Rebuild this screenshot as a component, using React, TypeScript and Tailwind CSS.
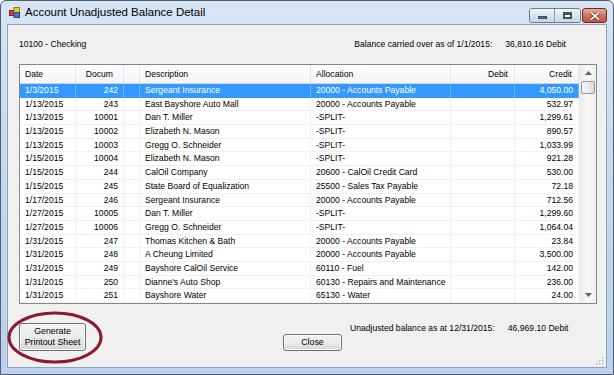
import React from 'react';

const rows = [
  ['1/3/2015', '242', 'Sergeant Insurance', '20000 - Accounts Payable', '', '4,050.00'],
  ['1/13/2015', '243', 'East Bayshore Auto Mall', '20000 - Accounts Payable', '', '532.97'],
  ['1/13/2015', '10001', 'Dan T. Miller', '-SPLIT-', '', '1,299.61'],
  ['1/13/2015', '10002', 'Elizabeth N. Mason', '-SPLIT-', '', '890.57'],
  ['1/13/2015', '10003', 'Gregg O. Schneider', '-SPLIT-', '', '1,033.99'],
  ['1/15/2015', '10004', 'Elizabeth N. Mason', '-SPLIT-', '', '921.28'],
  ['1/15/2015', '244', 'CalOil Company', '20600 - CalOil Credit Card', '', '530.00'],
  ['1/15/2015', '245', 'State Board of Equalization', '25500 - Sales Tax Payable', '', '72.18'],
  ['1/17/2015', '246', 'Sergeant Insurance', '20000 - Accounts Payable', '', '712.56'],
  ['1/27/2015', '10005', 'Dan T. Miller', '-SPLIT-', '', '1,299.60'],
  ['1/27/2015', '10006', 'Gregg O. Schneider', '-SPLIT-', '', '1,064.04'],
  ['1/31/2015', '247', 'Thomas Kitchen & Bath', '20000 - Accounts Payable', '', '23.84'],
  ['1/31/2015', '248', 'A Cheung Limited', '20000 - Accounts Payable', '', '3,500.00'],
  ['1/31/2015', '249', 'Bayshore CalOil Service', '60110 - Fuel', '', '142.00'],
  ['1/31/2015', '250', "Dianne's Auto Shop", '60130 - Repairs and Maintenance', '', '236.00'],
  ['1/31/2015', '251', 'Bayshore Water', '65130 - Water', '', '24.00'],
];

const cols = 'grid grid-cols-[56px_48px_16px_171px_140px_64px_64px]';

const AppIcon = () => (
  <svg width="11" height="11" viewBox="0 0 11 11">
    <rect x="0.5" y="3.5" width="5" height="5" fill="#d43a2a" stroke="#8a1e14" />
    <rect x="5" y="0.5" width="5.5" height="5" fill="#f4c430" stroke="#a07a10" />
    <rect x="5" y="5.5" width="5.5" height="5" fill="#3a7bd5" stroke="#1c4a8a" />
  </svg>
);

const Btn: React.FC<{ className?: string; children: React.ReactNode }> = ({ className, children }) => (
  <button
    className={`border border-[#707070] rounded-[3px] bg-gradient-to-b from-[#f2f2f2] via-[#ebebeb] to-[#d6d6d6] text-[8.8px] leading-[11px] text-black shadow-[inset_0_0_0_1px_#fcfcfc] ${className ?? ''}`}
  >
    {children}
  </button>
);

export default function App() {
  return (
    <div className="w-[614px] h-[375px] overflow-hidden bg-white font-['Liberation_Sans',Arial,sans-serif]">
      <div className="w-[614px] h-[375px] relative flex flex-col rounded-t-[6px] border border-[#4f5f70] bg-gradient-to-b from-[#d7e5f5] via-[#c3d7ee] to-[#bcd2ec]">
        {/* title bar */}
        <div className="h-[23px] flex items-center pl-[8px] pr-[6px] shrink-0">
          <AppIcon />
          <span className="ml-[5px] text-[11.5px] text-black">Account Unadjusted Balance Detail</span>
          <div className="ml-auto flex items-start self-start mt-[7px]">
            <div className="flex border border-[#6d7c8d] rounded-[3px] overflow-hidden">
              <div className="w-[25px] h-[13px] bg-gradient-to-b from-[#f4f7fb] via-[#dbe4ef] to-[#c9d6e5] border-r border-[#8d9bab] flex items-center justify-center">
                <div className="w-[9px] h-[3px] bg-[#5f6f80] border border-[#3f4c5a] mt-[4px]" />
              </div>
              <div className="w-[25px] h-[13px] bg-gradient-to-b from-[#f4f7fb] via-[#dbe4ef] to-[#c9d6e5] flex items-center justify-center">
                <div className="w-[9px] h-[7px] border-[2px] border-t-[3px] border-[#44525f] bg-white" />
              </div>
            </div>
            <div className="ml-[1px] w-[25px] h-[15px] border border-[#6b2e26] rounded-[3px] bg-gradient-to-b from-[#e9a99c] via-[#d3705f] to-[#c4503d] flex items-center justify-center">
              <svg width="10" height="8" viewBox="0 0 10 8">
                <path d="M1 0.5 L9 7.5 M9 0.5 L1 7.5" stroke="#4a1a14" strokeWidth="3" />
                <path d="M1 0.5 L9 7.5 M9 0.5 L1 7.5" stroke="#ffffff" strokeWidth="1.8" />
              </svg>
            </div>
          </div>
        </div>

        {/* client area */}
        <div className="mx-[6px] mb-[6px] flex-1 relative flex flex-col bg-[#f0f0f0] border border-[#8ea3bb] text-[8.6px] text-black">
          <div className="h-[39px] flex items-center pl-[11px] pr-[40px] pb-[1px]">
            <span>10100 - Checking</span>
            <span className="ml-auto">Balance carried over as of 1/1/2015:</span>
            <span className="ml-[13px]">36,810.16 Debit</span>
          </div>

          {/* list view */}
          <div className="ml-[11px] w-[578px] h-[240px] border border-[#828790] bg-white flex overflow-hidden">
            <div className="w-[559px] flex flex-col">
              <div className={`${cols} h-[20px] border-b border-[#d5d5d5] bg-gradient-to-b from-white to-[#f3f4f6]`}>
                {['Date', 'Docum', '', 'Description', 'Allocation', 'Debit', 'Credit'].map((h, i) => (
                  <div
                    key={i}
                    className={`flex items-center border-r border-[#e3e5e8] ${i === 1 ? 'justify-end pr-[10px]' : i >= 5 ? 'justify-end pr-[6px]' : 'pl-[5px]'}`}
                  >
                    {h}
                  </div>
                ))}
              </div>
              {rows.map((r, ri) => {
                const sel = ri === 0;
                return (
                  <div
                    key={ri}
                    className={`${cols} h-[13.7px] shrink-0 leading-[13px] ${sel ? 'bg-[#3399ff] text-white' : 'border-b border-[#f0f0f0]'}`}
                  >
                    {r.slice(0, 2).concat([''], r.slice(2)).map((c, ci) => (
                      <div
                        key={ci}
                        className={`whitespace-nowrap overflow-hidden border-r ${sel ? 'border-[#6fb6ff]' : 'border-[#f0f0f0]'} ${ci === 1 || ci >= 5 ? 'text-right pr-[5px]' : 'pl-[5px]'}`}
                      >
                        {c}
                      </div>
                    ))}
                  </div>
                );
              })}
            </div>
            {/* scrollbar */}
            <div className="w-[17px] flex flex-col bg-gradient-to-r from-[#ebebeb] via-[#f7f7f7] to-[#efefef] border-l border-[#f0f0f0]">
              <div className="h-[16px] flex items-center justify-center">
                <svg width="7" height="4" viewBox="0 0 7 4"><path d="M0 4 L3.5 0 L7 4 Z" fill="#606060" /></svg>
              </div>
              <div className="mx-[1px] h-[13px] rounded-[2px] border border-[#979797] bg-gradient-to-r from-[#f4f4f4] via-[#ececec] to-[#d9d9d9]" />
              <div className="flex-1" />
              <div className="h-[16px] flex items-center justify-center">
                <svg width="7" height="4" viewBox="0 0 7 4"><path d="M0 0 L7 0 L3.5 4 Z" fill="#606060" /></svg>
              </div>
            </div>
          </div>

          {/* bottom */}
          <div className="flex-1 flex items-start">
            <Btn className="ml-[11px] mt-[19px] w-[67px] h-[28px]">
              Generate
              <br />
              Printout Sheet
            </Btn>
            <Btn className="ml-[197px] mt-[30px] w-[59px] h-[17px]">Close</Btn>
            <div className="ml-[8px] mt-[18px] flex">
              <span>Unadjusted balance as at 12/31/2015:</span>
              <span className="ml-[13px]">46,969.10 Debit</span>
            </div>
          </div>

          {/* resize grip */}
          <svg className="absolute right-[2px] bottom-[2px]" width="10" height="10" viewBox="0 0 10 10">
            {[
              [8, 2], [8, 5], [5, 5], [8, 8], [5, 8], [2, 8],
            ].map(([x, y], i) => (
              <rect key={i} x={x} y={y} width="1.5" height="1.5" fill="#b8b8b8" />
            ))}
          </svg>
        </div>

        {/* red highlight ellipse */}
        <svg className="absolute left-[6px] top-[310px] pointer-events-none" width="96" height="53" viewBox="0 0 96 53">
          <ellipse cx="48" cy="26.5" rx="46" ry="24.5" fill="none" stroke="#8a1c2e" strokeWidth="3" />
        </svg>
      </div>
    </div>
  );
}
